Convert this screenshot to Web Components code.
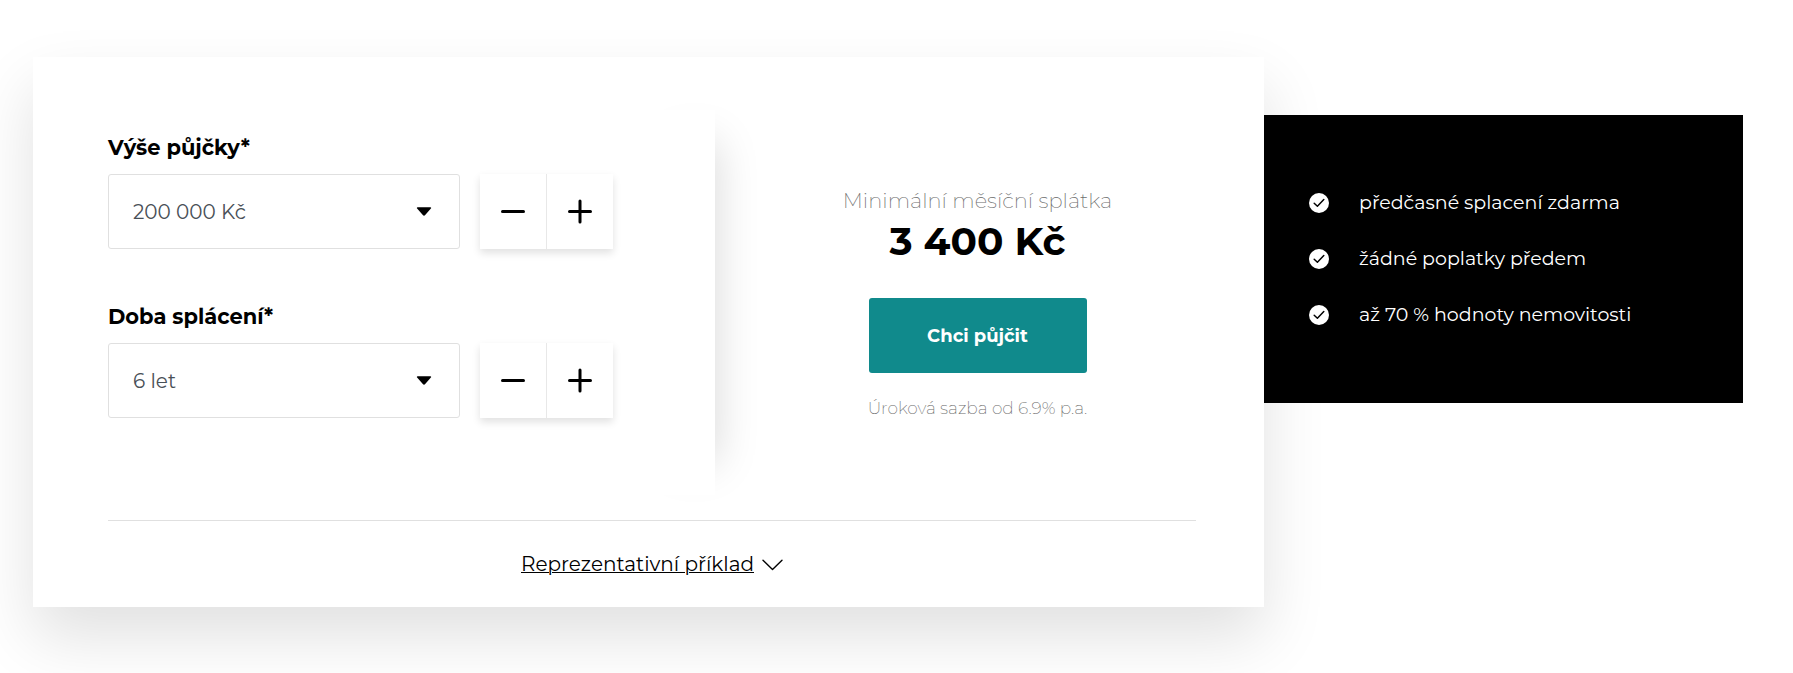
<!DOCTYPE html>
<html lang="cs">
<head>
<meta charset="utf-8">
<meta name="viewport" content="width=device-width, initial-scale=1">
<title>Kalkulačka půjčky</title>
<style>
  *, *::before, *::after { box-sizing: border-box; }
  body {
    margin: 0;
    background: #fff;
    color: #000;
    font-family: Montserrat, Inter, "Open Sans", sans-serif;
  }
</style>
</head>
<body>
<loan-calculator>
  <loan-card>
    <loan-panel slot="fields">
      <loan-field label="Výše půjčky*" options="100 000 Kč|200 000 Kč|300 000 Kč|400 000 Kč" value="200 000 Kč"></loan-field>
      <loan-field label="Doba splácení*" options="5 let|6 let|7 let|8 let" value="6 let"></loan-field>
    </loan-panel>
    <loan-summary slot="summary">
      <span slot="caption">Minimální měsíční splátka</span>
      <span slot="amount">3 400 Kč</span>
      <span slot="action">Chci půjčit</span>
      <span slot="note">Úroková sazba od 6.9% p.a.</span>
    </loan-summary>
    <more-link slot="footer">Reprezentativní příklad</more-link>
  </loan-card>
  <benefit-list slot="aside">
    <benefit-item>předčasné splacení zdarma</benefit-item>
    <benefit-item>žádné poplatky předem</benefit-item>
    <benefit-item>až 70 % hodnoty nemovitosti</benefit-item>
  </benefit-list>
</loan-calculator>

<script>
const define = (name, html, setup) => {
  const template = document.createElement('template');
  template.innerHTML = '<style>*,*::before,*::after{box-sizing:border-box}</style>' + html;
  customElements.define(name, class extends HTMLElement {
    constructor() {
      super();
      this.attachShadow({ mode: 'open' }).append(template.content.cloneNode(true));
    }
    connectedCallback() { if (setup) setup(this, this.shadowRoot); }
  });
};

define('loan-calculator', `
  <style>
    :host { display: flex; align-items: flex-start; padding: 57px 50px 66px 33px; overflow: hidden; }
    .main { flex: 1231 1 0; min-width: 0; }
    .aside { flex: 479 1 0; min-width: 0; padding-top: 58px; position: relative; }
  </style>
  <div class="main"><slot></slot></div>
  <div class="aside"><slot name="aside"></slot></div>`);

define('loan-card', `
  <style>
    :host { display: block; padding: 53px 24px 0 75px; background: #fff; box-shadow: 0 30px 60px rgba(0, 0, 0, .12); }
    .columns { display: grid; grid-template-columns: 607fr 525fr; isolation: isolate; }
    .footer { margin: 25px 44px 0 0; padding: 31px 0 30px; border-top: 1px solid #e0e0e0; text-align: center; }
  </style>
  <div class="columns"><slot name="fields"></slot><slot name="summary"></slot></div>
  <div class="footer"><slot name="footer"></slot></div>`);

define('loan-panel', `
  <style>
    :host { display: flex; flex-direction: column; gap: 56px; position: relative; padding: 26px 102px 77px 0; background: #fff; }
    /* soft shadow that only shows past the right edge */
    :host::after { content: ""; position: absolute; z-index: -1; top: 32px; right: 0; bottom: 32px; width: 40px; box-shadow: 0 0 44px rgba(0, 0, 0, .17); }
  </style>
  <slot></slot>`);

define('loan-field', `
  <style>
    :host { display: block; }
    label { display: block; margin-bottom: 14px; font-size: 21px; line-height: 24px; font-weight: 700; }
    .row { display: flex; gap: 20px; }
    .select { position: relative; flex: 1; min-width: 0; }
    select { appearance: none; display: block; width: 100%; height: 75px; padding: 0 56px 0 24px; border: 1px solid #e0e0e0; border-radius: 3px; background: #fff; color: #495057; font: inherit; font-size: 20px; }
    .select svg { position: absolute; right: 28px; top: 32px; pointer-events: none; }
    .stepper { display: grid; grid-template-columns: 67px 66px; box-shadow: 0 4px 8px rgba(0, 0, 0, .12); }
    button { display: grid; place-items: center; height: 75px; padding: 0; border: 0; background: #fff; color: #000; cursor: pointer; }
    button:first-child { border-right: 1px solid #e8e8e8; }
    button svg { fill: none; stroke: currentColor; stroke-width: 3; stroke-linecap: round; }
  </style>
  <label for="value"></label>
  <div class="row">
    <div class="select">
      <select id="value"></select>
      <svg width="16" height="11" viewBox="0 0 16 11"><path d="M1.6 1.2h12.8c.8 0 1 .8.5 1.4L9.2 9.1c-.7.7-1.7.7-2.4 0L1.1 2.6C.6 2 .8 1.2 1.6 1.2z"/></svg>
    </div>
    <div class="stepper">
      <button type="button" aria-label="Snížit"><svg width="26" height="26"><path d="M2.5 12.5h21"/></svg></button>
      <button type="button" aria-label="Zvýšit"><svg width="26" height="26"><path d="M2.5 12.5h21M13 2v21"/></svg></button>
    </div>
  </div>`, (host, root) => {
    const select = root.querySelector('select');
    const [less, more] = root.querySelectorAll('button');
    root.querySelector('label').textContent = host.getAttribute('label');
    select.replaceChildren(...host.getAttribute('options').split('|').map(text => new Option(text)));
    select.value = host.getAttribute('value');
    less.onclick = () => { select.selectedIndex = Math.max(0, select.selectedIndex - 1); };
    more.onclick = () => { select.selectedIndex = Math.min(select.length - 1, select.selectedIndex + 1); };
  });

define('loan-summary', `
  <style>
    :host { display: flex; flex-direction: column; align-items: center; padding-top: 76px; text-align: center; }
    .caption { font-size: 21px; line-height: 30px; font-weight: 200; color: #6c6c6c; }
    .amount { font-size: 39px; line-height: 50px; font-weight: 700; }
    button { width: 218px; height: 75px; margin: 32px 0 23px; border: 0; border-radius: 3px; background: #108a8c; color: #fff; font: inherit; font-size: 18px; font-weight: 700; cursor: pointer; }
    .note { font-size: 17px; line-height: 24px; font-weight: 200; color: #6c6c6c; }
  </style>
  <div class="caption"><slot name="caption"></slot></div>
  <div class="amount"><slot name="amount"></slot></div>
  <button type="button"><slot name="action"></slot></button>
  <div class="note"><slot name="note"></slot></div>`);

define('more-link', `
  <style>
    :host { display: block; }
    a { display: inline-flex; align-items: center; gap: 8px; color: #000; font-size: 20px; line-height: 25px; text-decoration: none; }
    span { text-decoration: underline; text-decoration-thickness: 1px; }
    svg { fill: none; stroke: currentColor; stroke-width: 1.4; stroke-linecap: round; stroke-linejoin: round; }
  </style>
  <a href="#priklad"><span><slot></slot></span><svg width="21" height="12"><path d="M1 1.2l9.5 9.2L20 1.2"/></svg></a>`);

define('benefit-list', `
  <style>
    :host { display: flex; flex-direction: column; gap: 32px; padding: 76px 24px 76px 45px; background: #000; color: #fff; }
  </style>
  <slot></slot>`);

define('benefit-item', `
  <style>
    :host { display: flex; align-items: center; gap: 30px; font-size: 19px; line-height: 24px; font-weight: 400; }
    svg { flex: none; }
  </style>
  <svg width="20" height="20" viewBox="0 0 20 20"><circle cx="10" cy="10" r="10" fill="#fff"/><path d="M5.2 10.2l3.2 3 6.4-6.6" fill="none" stroke="#000" stroke-width="1.5" stroke-linecap="round" stroke-linejoin="round"/></svg>
  <span><slot></slot></span>`);
</script>
</body>
</html>
